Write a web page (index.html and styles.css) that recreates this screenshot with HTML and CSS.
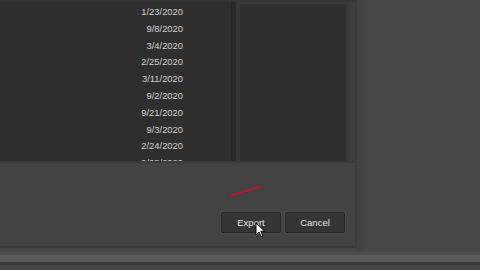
FILE: index.html
```html
<!DOCTYPE html>
<html>
<head>
<meta charset="utf-8">
<link rel="stylesheet" href="styles.css">
</head>
<body>
<div class="screen">
  <div class="top">
    <div class="dialog">
      <div class="panels">
        <div class="list">
          <div class="row">1/23/2020</div>
          <div class="row">9/8/2020</div>
          <div class="row">3/4/2020</div>
          <div class="row">2/25/2020</div>
          <div class="row">3/11/2020</div>
          <div class="row">9/2/2020</div>
          <div class="row">9/21/2020</div>
          <div class="row">9/3/2020</div>
          <div class="row">2/24/2020</div>
          <div class="row">9/28/2020</div>
        </div>
        <div class="sep"></div>
        <div class="side"></div>
        <div class="sep2"></div>
      </div>
      <div class="footer">
        <svg class="mark" width="40" height="16" viewBox="0 0 40 16">
          <path d="M2 13 L34 3" stroke="#7a2a33" stroke-width="4" stroke-linecap="round" opacity="0.45"/>
          <path d="M3 12.5 L33 3.2" stroke="#b01c2e" stroke-width="1.6" stroke-linecap="round"/>
        </svg>
        <div class="buttons">
          <div class="btn">Export</div>
          <div class="btn">Cancel</div>
        </div>
        <svg class="cursor" width="11" height="16" viewBox="0 0 11 16">
          <path d="M1 1 L1 13 L4 10 L6.2 14.8 L8 14 L5.9 9.3 L9.8 9.3 Z" fill="#fff" stroke="#000" stroke-width="1" stroke-linejoin="round"/>
        </svg>
      </div>
    </div>
    <div class="rest"></div>
  </div>
  <div class="strip">
    <div class="s1"></div>
    <div class="s2"></div>
    <div class="s3"></div>
  </div>
</div>
</body>
</html>
```
FILE: styles.css
```css
html, body {
  margin: 0;
  padding: 0;
  background: #464646;
  width: 480px;
  height: 270px;
  overflow: hidden;
}
.screen {
  width: 480px;
  height: 270px;
  display: flex;
  flex-direction: column;
}
.top {
  display: flex;
  height: 252px;
  flex: none;
}
.dialog {
  width: 355px;
  height: 246px;
  background: #434343;
  border-right: 2px solid #3b3b3b;
  border-bottom: 2px solid #393939;
  border-bottom-right-radius: 2px;
  display: flex;
  flex-direction: column;
  flex: none;
}
.panels {
  display: flex;
  height: 159px;
  border-top: 2px solid #363636;
  border-bottom: 2px solid #3a3a3a;
  flex: none;
}
.list {
  width: 231px;
  background: #2e2e2e;
  overflow: hidden;
  padding-top: 2px;
  box-sizing: border-box;
}
.row {
  width: 183px;
  height: 16.8px;
  line-height: 16.8px;
  text-align: right;
  font-family: "Liberation Sans", Arial, sans-serif;
  font-size: 9.4px;
  color: #d2d2d2;
}
.sep {
  width: 9px;
  background: #2a2a2a;
  border-left: 1px solid #262626;
  border-right: 4px solid #383838;
  box-sizing: border-box;
}
.side {
  width: 106px;
  background: #2f2f2f;
  border-top: 2px solid #3a3a3a;
  box-sizing: border-box;
}
.sep2 {
  flex: 1;
  background: #3d3d3d;
  border-left: 3px solid #383838;
}
.footer {
  flex: 1;
  position: relative;
  display: flex;
  justify-content: flex-end;
  align-items: flex-start;
  padding: 49px 10px 0 0;
}
.buttons {
  display: flex;
  gap: 4px;
}
.btn {
  width: 58px;
  height: 19px;
  background: #353535;
  border: 1px solid #262626;
  box-shadow: 0 0 0 1px #4c4c4c;
  border-radius: 2px;
  color: #e4e4e4;
  font-family: "Liberation Sans", Arial, sans-serif;
  font-size: 9.5px;
  line-height: 19px;
  text-align: center;
}
.mark {
  position: absolute;
  left: 228px;
  top: 20px;
}
.cursor {
  position: absolute;
  left: 255px;
  top: 59px;
}
.rest {
  flex: 1;
  background: linear-gradient(to right, #414141, #474747 10px);
}
.strip {
  flex: 1;
  display: flex;
  flex-direction: column;
}
.s1 {
  height: 3px;
  background: #4d4d4d;
}
.s2 {
  height: 7px;
  background: #5a5a5a;
}
.s3 {
  height: 3px;
  background: #383838;
}
```
